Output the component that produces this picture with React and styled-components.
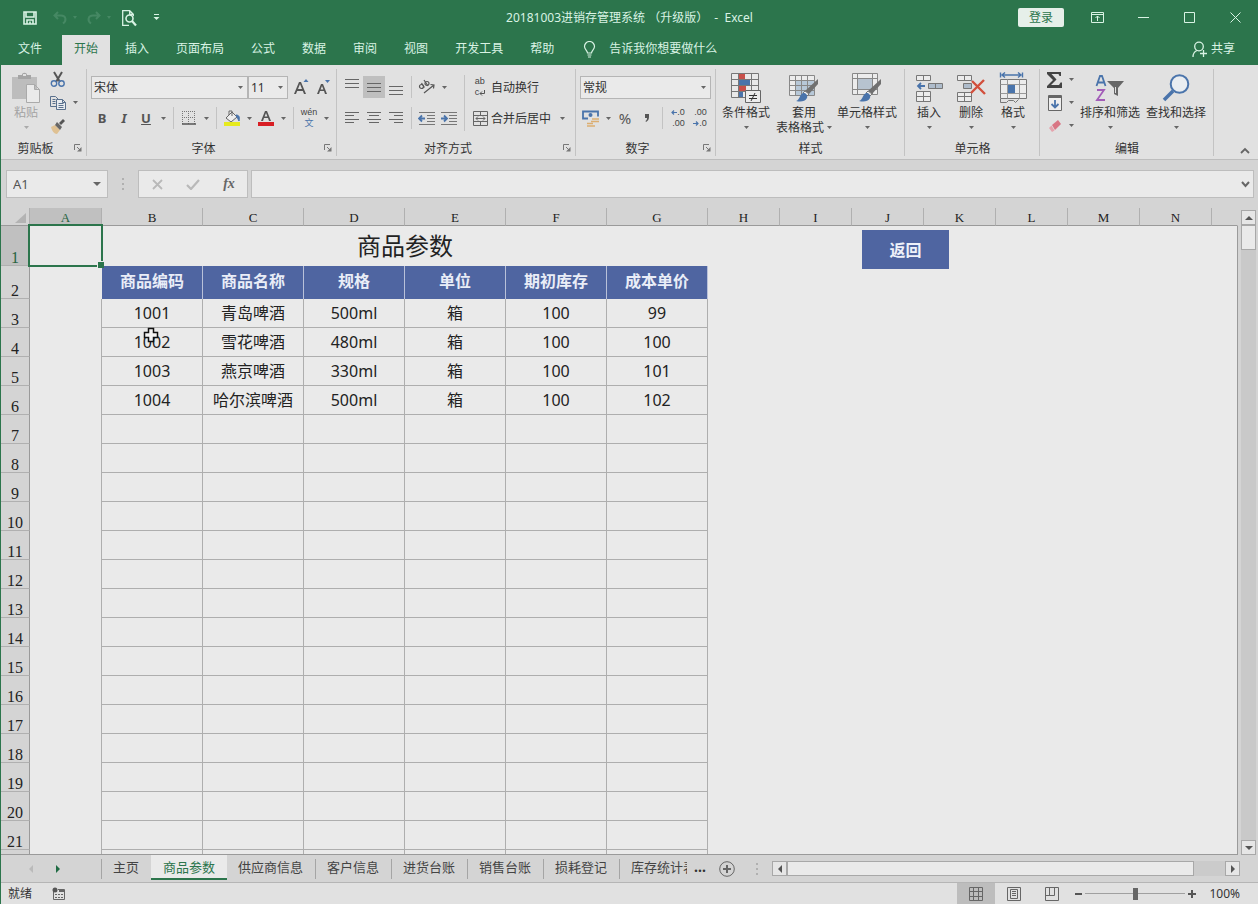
import React from "react";
import styled, { createGlobalStyle, css } from "styled-components";

const c = {
  green: "#2c754c",
  pale: "#d9f3e4",
  ribbon: "#e1e1e1",
  chrome: "#d4d4d4",
  sheet: "#eaeaea",
  line: "#aeaeae",
  edge: "#9a9a9a",
  ink: "#333333",
  icon: "#666666",
  blue: "#4a74ab",
  head: "#4f65a1",
  faded: "#458863",
};

const GlobalStyle = createGlobalStyle`
  * { box-sizing: border-box; }
  body { margin: 0; background: ${c.chrome}; }
  body, button, input, select {
    font-family: "Noto Sans", "Noto Sans CJK SC", sans-serif;
    font-size: 12px;
    line-height: 16px;
    color: ${c.ink};
  }
  button { border: 0; padding: 0; background: none; }
  svg { display: block; flex: none; }
`;

const Window = styled.div`
  display: flex;
  flex-direction: column;
  height: 100vh;
  overflow: hidden;
  border-left: 1px solid ${c.green};
`;

/* Title bar */
const TitleBar = styled.header`
  display: grid;
  grid-template-columns: 1fr auto 1fr;
  align-items: center;
  height: 35px;
  flex: none;
  background: ${c.green};
  color: ${c.pale};
`;
const QuickAccess = styled.div`
  display: flex;
  align-items: center;
  padding-left: 18px;
`;
const QuickButton = styled.button`
  display: grid;
  place-items: center;
  width: ${(p) => (p.$narrow ? 8 : 22)}px;
  height: 24px;
  margin-right: ${(p) => p.$gap || 0}px;
  color: ${(p) => (p.$off ? c.faded : c.pale)};
`;
const Title = styled.h1`
  margin: 0;
  font-size: 12px;
  font-weight: 400;
  line-height: 16px;
  white-space: pre;
`;
const WindowControls = styled.div`
  display: flex;
  align-items: center;
  justify-content: flex-end;
`;
const LoginButton = styled.button`
  width: 46px;
  height: 19px;
  margin-right: 10px;
  border-radius: 2px;
  background: #e6efe9;
  color: ${c.green};
`;
const WindowButton = styled.button`
  display: grid;
  place-items: center;
  width: 46px;
  height: 32px;
  color: ${c.pale};
`;

/* Ribbon tabs */
const TabBar = styled.nav`
  display: flex;
  align-items: stretch;
  gap: 3px;
  height: 30px;
  flex: none;
  padding-left: 5px;
  background: ${c.green};
`;
const RibbonTab = styled.button`
  padding: 0 12px 2px;
  margin-right: ${(p) => (p.$file ? 5 : 0)}px;
  color: ${(p) => (p.$active ? c.green : c.pale)};
  background: ${(p) => (p.$active ? c.ribbon : "transparent")};
`;
const TellMe = styled.button`
  display: flex;
  align-items: center;
  gap: 13px;
  padding: 0 0 2px 14px;
  color: ${c.pale};
`;
const Share = styled(TellMe)`
  gap: 4px;
  margin-left: auto;
  padding-right: 23px;
`;

/* Ribbon */
const Ribbon = styled.section`
  display: flex;
  height: 95px;
  flex: none;
  background: ${c.ribbon};
  border-bottom: 1px solid #bdbdbd;
`;
const GroupBox = styled.div`
  display: flex;
  flex-direction: column;
  width: ${(p) => p.$width}px;
  flex: none;
  background: linear-gradient(#c3c3c3, #c3c3c3) right 4px / 1px 87px no-repeat;
`;
const GroupBody = styled.div`
  display: flex;
  flex: 1;
  padding-left: ${(p) => p.$pad}px;
`;
const GroupFooter = styled.div`
  display: flex;
  align-items: center;
  height: 22px;
  text-align: center;
`;
const GroupName = styled.span`
  flex: 1;
  padding-top: 2px;
`;
const Launcher = styled.button`
  width: 17px;
  height: 16px;
  padding: 6px 0 0 4px;
  align-self: flex-start;
`;
const ToolRows = styled.div`
  display: flex;
  flex-direction: column;
  gap: 9px;
  padding-top: 11px;
`;
const ToolRow = styled.div`
  display: flex;
  align-items: center;
  height: 22px;
`;
const ToolStack = styled.div`
  display: flex;
  flex-direction: column;
  padding-top: 3px;
`;
const StackRow = styled.div`
  display: flex;
  align-items: center;
  height: 23px;
`;
const Tool = styled.button`
  display: grid;
  place-items: center;
  width: 22px;
  height: 22px;
  flex: none;
  color: #555;
  background: ${(p) => (p.$on ? "#bfbfbf" : "transparent")};
`;
const LetterTool = styled(Tool)`
  font-size: 13px;
  font-weight: ${(p) => (p.$plain ? 400 : 700)};
  font-style: ${(p) => (p.$italic ? "italic" : "normal")};
  text-decoration: ${(p) => (p.$under ? "underline" : "none")};
`;
const PercentTool = styled(LetterTool)`
  font-size: 15px;
`;
const DropButton = styled.button`
  display: grid;
  place-items: center;
  width: ${(p) => (p.$slim ? 11 : 12)}px;
  height: 22px;
  flex: none;
`;
const Divider = styled.span`
  width: 1px;
  height: ${(p) => (p.$tall ? 56 : 22)}px;
  margin: ${(p) => (p.$tall ? "10px" : "0")} 4px 0;
  background: #c3c3c3;
`;
const TextTool = styled.button`
  display: flex;
  align-items: center;
  height: 22px;
`;
const ToolText = styled.span`
  padding-top: 2px;
`;
const IconSlot = styled.span`
  display: grid;
  place-items: center;
  width: 22px;
`;
const ArrowSlot = styled.span`
  padding-left: 9px;
`;
const SelectBox = styled.span`
  display: flex;
  align-items: center;
  position: relative;
  width: ${(p) => p.$width}px;
  height: 23px;
  margin-right: ${(p) => p.$gap || 0}px;
  border: 1px solid #b5b5b5;
  background: ${c.sheet};
  svg {
    position: absolute;
    right: 4px;
    pointer-events: none;
  }
`;
const Select = styled.select`
  width: 100%;
  height: 21px;
  padding: 2px 2px 0;
  border: 0;
  appearance: none;
  background: none;
`;
const BigButton = styled.button`
  display: flex;
  flex-direction: column;
  align-items: center;
  width: ${(p) => p.$width}px;
  padding-top: 6px;
  line-height: 15px;
  white-space: nowrap;
  color: ${(p) => (p.$off ? "#a3a3a3" : c.ink)};
`;
const BigIcon = styled.span`
  display: grid;
  place-items: center;
  height: 34px;
`;
const BigLine = styled.span`
  display: flex;
  align-items: center;
  justify-content: center;
  gap: 3px;
  height: 15px;
`;
const CollapseArea = styled.div`
  display: flex;
  flex: 1;
  align-items: flex-end;
  justify-content: flex-end;
  padding: 0 8px 3px 0;
`;

/* Formula bar */
const FormulaBar = styled.section`
  display: flex;
  align-items: center;
  height: 48px;
  flex: none;
  padding: 0 4px 0 5px;
  background: ${c.chrome};
`;
const NameBox = styled.div`
  display: flex;
  align-items: center;
  width: 102px;
  height: 28px;
  padding-right: 6px;
  border: 1px solid #bdbdbd;
  background: ${c.sheet};
`;
const NameInput = styled.input`
  flex: 1;
  min-width: 0;
  padding: 0 6px;
  border: 0;
  background: none;
  font-size: 13px;
  color: #555;
`;
const Grip = styled.span`
  display: grid;
  place-items: center;
  width: 30px;
`;
const EntryButtons = styled.div`
  display: flex;
  align-items: center;
  width: 110px;
  height: 28px;
  margin-right: 3px;
  border: 1px solid #bdbdbd;
  background: ${c.sheet};
`;
const EntryButton = styled.button`
  display: grid;
  place-items: center;
  flex: 1;
  height: 26px;
  font: italic 700 14px/20px "Liberation Serif", serif;
  color: #666;
`;
const FormulaField = styled.div`
  display: flex;
  align-items: center;
  flex: 1;
  height: 28px;
  padding-right: 3px;
  border: 1px solid #bdbdbd;
  background: ${c.sheet};
`;
const FormulaInput = styled.input`
  flex: 1;
  min-width: 0;
  padding: 0 6px;
  border: 0;
  background: none;
`;

/* Worksheet */
const Workspace = styled.main`
  display: flex;
  flex: 1;
  min-height: 0;
  background: ${c.chrome};
`;
const SheetArea = styled.div`
  flex: 1;
  min-width: 0;
  overflow: hidden;
  border-bottom: 1px solid ${c.edge};
`;
const Grid = styled.table`
  width: 100%;
  table-layout: fixed;
  border-collapse: separate;
  border-spacing: 0;
`;
const Col = styled.col`
  width: ${(p) => (p.$width ? `${p.$width}px` : "auto")};
`;
const ColumnHead = styled.th`
  height: 18px;
  padding: 3px 0 0;
  border-right: 1px solid ${(p) => (p.$last ? "transparent" : "#b0b0b0")};
  border-bottom: 1px solid ${c.edge};
  background: ${(p) => (p.$active ? "#c0c0c0" : c.chrome)};
  color: ${(p) => (p.$active ? "#27633f" : "#222")};
  font: 400 13px/14px "Liberation Serif", serif;
`;
const Corner = styled.th`
  height: 18px;
  padding: 3px 3px 0 14px;
  border-bottom: 1px solid ${c.edge};
  border-right: 1px solid #b0b0b0;
  background: ${c.chrome};
`;
const RowHead = styled.th`
  height: ${(p) => p.$height}px;
  padding: 0;
  vertical-align: bottom;
  border-right: 1px solid ${c.edge};
  border-bottom: 1px solid #b0b0b0;
  background: ${(p) => (p.$active ? "#c0c0c0" : c.chrome)};
  color: ${(p) => (p.$active ? "#27633f" : "#222")};
  font: 400 16px/14px "Liberation Serif", serif;
`;
const Cell = styled.td`
  position: relative;
  padding: 0;
  background: ${c.sheet};
  font-size: 16px;
  line-height: 20px;
  text-align: center;
  white-space: nowrap;
  color: #222;
  ${(p) => p.$lined && css`
    border-right: 1px solid ${c.line};
    border-bottom: 1px solid ${c.line};
  `}
  ${(p) => p.$sideLine && css`
    border-right: 1px solid ${c.line};
  `}
  ${(p) => p.$end && css`
    border-right: 1px solid ${c.edge};
  `}
`;
const TitleCell = styled(Cell)`
  font-size: 24px;
  line-height: 32px;
`;
const HeadCell = styled.th`
  padding: 0 0 4px;
  border-right: 1px solid #b9c1d9;
  background: ${c.head};
  color: #e9edf7;
  font-size: 16px;
  font-weight: 700;
  line-height: 20px;
`;
const Selection = styled.span`
  position: absolute;
  inset: -2px -1px -1px -2px;
  z-index: 1;
  border: 2px solid ${c.green};
  &::after {
    content: "";
    position: absolute;
    right: -3px;
    bottom: -3px;
    width: 6px;
    height: 6px;
    border: solid ${c.sheet};
    border-width: 1px 0 0 1px;
    background: ${c.green};
  }
`;
const BackButton = styled.button`
  position: absolute;
  left: 10px;
  top: 4px;
  z-index: 1;
  width: 87px;
  height: 39px;
  background: ${c.head};
  color: #eef1f9;
  font-size: 16px;
  font-weight: 700;
`;
const Pointer = styled.svg`
  position: absolute;
  left: 41px;
  top: -1px;
`;

const VerticalScroll = styled.div`
  display: flex;
  flex-direction: column;
  width: 15px;
  margin: 2px 2px 0 3px;
  background: #c9c9c9;
`;
const ScrollButton = styled.button`
  display: grid;
  place-items: center;
  width: 15px;
  height: 15px;
  flex: none;
  border: 1px solid #a8a8a8;
  background: #e6e6e6;
`;
const ScrollThumb = styled.div`
  height: 25px;
  border: 1px solid #a8a8a8;
  background: ${c.sheet};
`;
const Spacer = styled.span`
  flex: 1;
`;

/* Sheet tabs */
const SheetBar = styled.section`
  display: flex;
  align-items: center;
  height: 27px;
  flex: none;
  background: ${c.chrome};
`;
const SheetNav = styled.div`
  display: flex;
  align-items: center;
  justify-content: space-between;
  width: 101px;
  height: 20px;
  padding: 0 36px 0 23px;
  border-right: 1px solid #a5a5a5;
`;
const NavButton = styled.button`
  display: grid;
  place-items: center;
  width: 14px;
  height: 16px;
`;
const SheetTab = styled.button`
  height: ${(p) => (p.$active ? 25 : 20)}px;
  align-self: ${(p) => (p.$active ? "flex-start" : "center")};
  padding: 0 12px 4px 11px;
  flex: none;
  border-right: 1px solid ${(p) => (p.$plain ? "transparent" : "#a5a5a5")};
  font-size: 13px;
  line-height: 16px;
  color: #444;
  ${(p) => p.$plain && css`
    padding-right: 11px;
  `}
  ${(p) => p.$active && css`
    padding: 0 12px;
    border-right: 0;
    border-bottom: 2px solid ${c.green};
    background: ${c.sheet};
    color: ${c.green};
  `}
`;
const ClippedTab = styled(SheetTab)`
  width: 67px;
  padding-right: 0;
  border-right: 0;
  overflow: hidden;
  white-space: nowrap;
  text-align: left;
`;
const More = styled.button`
  width: 26px;
  height: 20px;
  padding-bottom: 4px;
  font-size: 14px;
  font-weight: 700;
`;
const AddSheet = styled.button`
  display: grid;
  place-items: center;
  width: 28px;
`;
const SplitGrip = styled(Grip)`
  width: 31px;
`;
const HorizontalScroll = styled.div`
  display: flex;
  flex: 1;
  height: 15px;
  margin-right: 18px;
  background: #cbcbcb;
`;
const HorizontalThumb = styled.div`
  flex: 1;
  margin-right: 31px;
  border: 1px solid #a8a8a8;
  background: ${c.sheet};
`;

/* Status bar */
const StatusBar = styled.footer`
  display: flex;
  align-items: center;
  height: 22px;
  flex: none;
  padding: 0 18px 0 7px;
  border-top: 1px solid #b5b5b5;
  background: ${c.ribbon};
`;
const MacroButton = styled.button`
  margin-left: 20px;
`;
const ViewButton = styled.button`
  display: grid;
  place-items: center;
  width: 38px;
  height: 21px;
  background: ${(p) => (p.$on ? "#bdbdbd" : "transparent")};
`;
const ZoomButton = styled.button`
  display: grid;
  place-items: center;
  width: 14px;
  height: 20px;
`;
const ZoomSlider = styled.input`
  width: 100px;
  height: 14px;
  margin: 0;
  appearance: none;
  background: linear-gradient(#a0a0a0, #a0a0a0) center / 100% 1px no-repeat;
  &::-webkit-slider-thumb {
    appearance: none;
    width: 5px;
    height: 12px;
    background: #666;
  }
`;
const ZoomValue = styled.span`
  width: 41px;
  text-align: right;
`;

/* Icons */
const Caret = ({ color = "#666", w = 5 }) => (
  <svg width={w} height={w > 6 ? 4 : 3} viewBox="0 0 5 3" preserveAspectRatio="none"><path d="M0 0h5L2.500 3z" fill={color} /></svg>
);
const Drop = ({ label, slim }) => (
  <DropButton aria-label={label} $slim={slim}><Caret /></DropButton>
);
const Icon = ({ w = 16, h = 16, children, ...rest }) => (
  <svg width={w} height={h} viewBox={`0 0 ${w} ${h}`} fill="none" stroke="currentColor" {...rest}>{children}</svg>
);
const SaveIcon = () => (
  <Icon strokeWidth="1.6"><path d="M2 2h12v12H2zM4 2v5h8V2M5 14v-4h6v4M8 11.500V14" /></Icon>
);
const UndoIcon = ({ flip }) => (
  <Icon strokeWidth="2" transform={flip ? "scale(-1 1)" : undefined}><path d="M6 2 2.500 5.500 6 9M3 5.500h6c5 0 6 5 2 8" /></Icon>
);
const PreviewIcon = () => (
  <Icon w={16} h={18} strokeWidth="1.300"><path d="M8 16.300H1.700V1.700h7l3.600 3.600v2M8.700 1.700v3.600h3.600" /><circle cx="8.500" cy="9.500" r="3.500" strokeWidth="1.600" /><path d="m11 12 4 4.500" strokeWidth="2.200" /></Icon>
);
const CustomizeIcon = () => (
  <Icon w={7} h={7}><path d="M1 .5h5" /><path d="M.5 3h6l-3 3z" fill="currentColor" stroke="none" /></Icon>
);
const BulbIcon = () => (
  <Icon w={13} h={17} strokeWidth="1.200"><path d="M4.500 12c0-2.500-3-3.500-3-6.500a5 5 0 0 1 10 0c0 3-3 4-3 6.500zM4.500 14h4M5 16h3" /></Icon>
);
const PersonIcon = () => (
  <Icon w={15} h={17} strokeWidth="1.300"><circle cx="7" cy="5.500" r="4.300" /><path d="M1 16c0-3.500 1.500-5.500 4-6.500M11.500 9v7M8 12.500h7" /></Icon>
);
const LauncherIcon = () => (
  <Icon w={8} h={8} stroke="#777"><path d="M.5 6V.5H6M3 3l3 3" /><path d="M7.500 3v4.500H3z" fill="#777" stroke="none" /></Icon>
);
const PasteIcon = () => (
  <Icon w={28} h={32} stroke="none">
    <path d="M0 5h25v22H0z" fill="#bdbdbd" /><path d="M6 7V3h4c0-3 5-3 5 0h4v4z" fill="#a5a5a5" /><path d="M11 2h3v2h-3z" fill="#e1e1e1" />
    <path d="M14.500 12.500h8l5 5v13h-13zM22.500 12.500v5h5" fill="#eaeaea" stroke="#aaa" />
  </Icon>
);
const CutIcon = () => (
  <Icon w={16} h={17} strokeWidth="2"><path d="m4 1 6 10M12 1 6 11" stroke="#555" /><circle cx="4" cy="12.500" r="2.700" stroke={c.blue} strokeWidth="1.400" /><circle cx="11.500" cy="12.500" r="2.700" stroke={c.blue} strokeWidth="1.400" /></Icon>
);
const CopyIcon = () => (
  <Icon w={17} h={16} stroke="#59708d"><path d="M6.500 11.500h-6V1.500h5l3 3M2.500 4.500h3M2.500 6.500h3M2.500 8.500h3" /><path d="M6.500 4.500h6l3 3v7h-9z" fill="#e7ebf0" /><path d="M8.500 8.500h5M8.500 10.500h5M8.500 12.500h5M12.500 4.500v3h3" /></Icon>
);
const BrushIcon = () => (
  <Icon w={16} h={16} stroke="none"><path d="m1 9 4-2 5 5-3 4c-3 0-5-3-6-7z" fill="#dfc193" /><path d="m5 7 2-3 5 5-2 3z" fill="#666" /><path d="m9 5 4-4 2 2-4 4z" fill="#555" /></Icon>
);
const SizeIcon = ({ down }) => (
  <Icon w={15} h={16} stroke="none" fill="#555">
    <path fillRule="evenodd" d={down ? "M1 15 5 5h2l4 10H9l-1-3H4l-1 3zm3.600-4.500h2.800L6 7z" : "M0 15 5 3h2l5 12h-2l-1.200-3H3.200L2 15zm4-5h4L6 5z"} />
    <path d={down ? "M9 1h5l-2.500 3z" : "M9.500 3h5L12 0z"} fill={c.blue} />
  </Icon>
);
const BorderIcon = () => (
  <Icon w={14} h={14}><path d="M.5 0v13M6.500 0v13M12.500 0v13M0 .5h13M0 6.500h13" strokeDasharray="1 1" stroke="#777" /><path d="M0 13h14" strokeWidth="1.500" /></Icon>
);
const FillIcon = () => (
  <Icon w={17} h={17}><path d="m2 8 6-6 5 5-6 5zM5 5V1h3v5" fill="#eee" stroke="#666" /><path d="M12 5c3 0 4 2 3 6l-2-4z" fill={c.blue} stroke={c.blue} /><path d="M0 12h16v4H0z" fill="#e6ea1e" stroke="none" /></Icon>
);
const FontColorIcon = () => (
  <Icon w={16} h={17} stroke="none"><path fillRule="evenodd" d="M3 11 7 1h2l4 10h-2l-1-3H6l-1 3zm3.600-4.500h2.800L8 3z" fill="#555" /><path d="M0 12h16v4H0z" fill="#d81e24" /></Icon>
);
const TinyStack = styled.span`
  display: flex;
  flex-direction: column;
  align-items: ${(p) => p.$align || "center"};
  font: 9px/11px "Liberation Sans", "Noto Sans CJK SC", sans-serif;
  color: #444;
`;
const TinyLine = styled.span`
  display: flex;
  align-items: center;
  height: 11px;
  color: ${(p) => (p.$blue ? c.blue : "inherit")};
`;
const LinesIcon = ({ rows }) => (
  <Icon w={14} h={16} stroke="#666">{rows.map(([x, y, w]) => <path key={y} d={`M${x} ${y}.5h${w}`} />)}</Icon>
);
const OrientIcon = () => (
  <Icon w={18} h={16} strokeWidth="1.200"><circle cx="3.500" cy="7.500" r="2" /><path d="m3.500 4 3 4.500M6 1l4 6" /><circle cx="9" cy="4.500" r="2" /><path d="m6 14 10-8M12.500 5.500 16 6l-.5 3.500" /></Icon>
);
const IndentIcon = ({ out }) => (
  <Icon w={18} h={15}><path d="M1 1.500h16M9 4.500h8M9 7.500h8M9 10.500h8M1 13.500h16" stroke="#777" /><path d={out ? "M7 7.500H2M4 4.500 1 7.500l3 3" : "M1 7.500h5M4 4.500l3 3-3 3"} stroke={c.blue} strokeWidth="1.800" /></Icon>
);
const MergeIcon = () => (
  <Icon w={15} h={15} stroke="#666"><path d="M.5.500h14v14H.5zM.5 4.500h14M.5 10.500h14M7.500.500v4M7.500 10.500v4M3 7.500h9M5 5.500l-2 2 2 2M10 5.500l2 2-2 2" /></Icon>
);
const CurrencyIcon = () => (
  <Icon w={18} h={17}><path d="M6 8.500H1v-7h15v5" stroke={c.blue} strokeWidth="1.800" /><circle cx="8.500" cy="5" r="2" fill={c.blue} stroke="none" /><path d="M10 9h7M9 11.500h8M5 13.500h6M5 16h8" stroke="#dcae72" strokeWidth="1.600" /></Icon>
);
const CommaIcon = () => (
  <Icon w={6} h={8} stroke="none"><path d="M1 0h4v3c0 2-1 4-3 5l-.5-1C3 6 3 5 3 4H1z" fill="#555" /></Icon>
);
const MiniArrow = ({ right }) => (
  <Icon w={6} h={5} stroke={c.blue} strokeWidth="1.200"><path d={right ? "M0 2.500h5M3 .5l2 2-2 2" : "M6 2.500H1M3 .5l-2 2 2 2"} /></Icon>
);
const ReturnArrow = () => (
  <Icon w={6} h={6} stroke="#555"><path d="M5.500 0v3.500H1M3 1.500l-2 2 2 2" /></Icon>
);
const ConditionalIcon = () => (
  <Icon w={30} h={31} stroke="#777">
    <path d="M.5.500h27v24H.5z" fill="#e9e9e9" /><path d="M8 1h6v5H8zM8 13h7v5H8z" fill="#c8504a" stroke="none" /><path d="M8 7h11v5H8zM8 19h4v5H8z" fill={c.blue} stroke="none" />
    <path d="M.5 6.500h27M.5 12.500h27M.5 18.500h27M7.500.500v24M20.500.500v24" />
    <path d="M14.500 17.500h15v12h-15z" fill="#ececec" stroke="#666" /><path d="M18 22.500h8M18 25.500h8M24 20l-4 8" stroke="#333" />
  </Icon>
);
const StyleBrush = () => (
  <g stroke="none"><path d="M29 6v5L20 21l-4-3z" fill="#707070" /><path d="m16 18 4 3-2 2-4-3z" fill="#eee" stroke="#777" /><path d="M14 20c3 0 5 2 4 5-2 4-7 4-11 3 4-1 3-6 7-8z" fill={c.blue} /></g>
);
const TableStyleIcon = () => (
  <Icon w={30} h={31} stroke="#888"><path d="M.5 2.500h25v20H.5z" fill="#ececec" /><path d="M7 8h18v14H7z" fill="#b7c8d8" stroke="none" /><path d="M.5 7.500h25M.5 12.500h25M.5 17.500h25M6.500 2.500v20M12.500 2.500v20M18.500 2.500v20" /><StyleBrush /></Icon>
);
const CellStyleIcon = () => (
  <Icon w={30} h={31} stroke="#888"><path d="M.5.500h25v21H.5z" fill="#ececec" /><path d="M5.500.500v21M20.500.500v21M.5 5.500h25M.5 16.500h25" /><path d="M6 6h14v10H6z" fill="#b7c3cf" stroke="none" /><StyleBrush /></Icon>
);
const InsertIcon = () => (
  <Icon w={27} h={29} stroke="#777"><path d="M.5 1.500h14v5H.5zM7.500 1.500v5M.5 17.500h14v10H.5zM.5 22.500h14M7.500 17.500v10" fill="#ececec" /><path d="M12.500 9.500h14v5h-14zM19.500 9.500v5" fill="#aebccb" /><path d="M9 12H2M5 9l-3 3 3 3" stroke={c.blue} strokeWidth="1.800" /></Icon>
);
const DeleteIcon = () => (
  <Icon w={30} h={29} stroke="#777"><path d="M1.500 1.500h14v5h-14zM8.500 1.500v5M1.500 18.500h14v9h-14zM1.500 22.500h14M8.500 18.500v9" fill="#ececec" /><path d="M7.500 9.500h8v5h-8z" fill="#aebccb" /><path d="m16 7 13 13M28 6 15 19" stroke="#d2503d" strokeWidth="2.400" /></Icon>
);
const FormatIcon = () => (
  <Icon w={29} h={32} stroke="#777"><path d="M1.500.500v5M23.500.500v5M3 3h19M6 .5 3 3l3 2.500M19 .5 22 3l-3 2.500" stroke={c.blue} strokeWidth="1.400" /><path d="M1.500 7.500h26v19h-26z" fill="#ececec" /><path d="M8.500 7.500v19M20.500 7.500v19M1.500 12.500h26M1.500 21.500h26" stroke="#999" /><path d="M9 13h7v8H9z" fill={c.blue} stroke="none" /><path d="M1.500 27v3.500h6l2-2h5l2 2 3-3" /></Icon>
);
const SumIcon = () => (
  <Icon w={16} h={16} stroke="none"><path d="M0 0h14v4h-1.500L11.500 2H4.500l5 5.500L4 13h8l1.500-2.500H15V16H0v-2l6-6-6-6z" fill="#444" /></Icon>
);
const FillDownIcon = () => (
  <Icon w={14} h={16} stroke="#666"><path d="M.5.500h13v15H.5z" fill="#eee" /><path d="M1 2h12" strokeWidth="2" /><path d="M7 5v7M3.500 9 7 12.500 10.500 9" stroke={c.blue} strokeWidth="1.800" /></Icon>
);
const EraserIcon = () => (
  <Icon w={14} h={14} stroke="none"><path d="m4 6 6-5 3 4-6 6z" fill="#d97584" /><path d="m3.500 6.500 3 5L4 13l-3-4z" fill="#e5a4ae" /></Icon>
);
const SortIcon = () => (
  <Icon w={30} h={30}><path d="M1.500 13 5 3h2l3.500 10M3 9.500h6" stroke={c.blue} strokeWidth="1.800" /><path d="M2 17h7L2 27h8" stroke="#a25cb8" strokeWidth="1.800" /><path d="M12 8h17l-6 7v8l-4-2v-6z" fill="#666" stroke="none" /><path d="M20.500 14v6" stroke="#e1e1e1" /></Icon>
);
const FindIcon = () => (
  <Icon w={28} h={28} stroke={c.blue}><circle cx="17.500" cy="10" r="8.800" strokeWidth="2" fill="#e9edf1" /><path d="m11 17-9 9" strokeWidth="3.600" /></Icon>
);
const GripIcon = () => (
  <Icon w={2} h={12} stroke="none" fill="#b0b0b0"><path d="M0 0h2v2H0zM0 5h2v2H0zM0 10h2v2H0z" /></Icon>
);
const Triangle = ({ dir, color = "#555" }) => {
  const d = { up: "M0 6h8L4 2z", down: "M0 2h8L4 6z", left: "M6 0v8L2 4z", right: "M2 0v8l4-4z" }[dir];
  return <Icon w={8} h={8} stroke="none"><path d={d} fill={color} /></Icon>;
};

const Group = ({ name, width, pad, launcher, children }) => (
  <GroupBox $width={width}>
    <GroupBody $pad={pad}>{children}</GroupBody>
    <GroupFooter>
      <GroupName>{name}</GroupName>
      {launcher && <Launcher aria-label={`${name}设置`}><LauncherIcon /></Launcher>}
    </GroupFooter>
  </GroupBox>
);

const Big = ({ icon, width, lines, off }) => (
  <BigButton $width={width} $off={off}>
    <BigIcon>{icon}</BigIcon>
    <BigLine>{lines[0]}</BigLine>
    <BigLine>{lines[1]}<Caret color={off ? "#aaa" : "#666"} /></BigLine>
  </BigButton>
);

const ribbonTabs = ["文件", "开始", "插入", "页面布局", "公式", "数据", "审阅", "视图", "开发工具", "帮助"];
const columns = "ABCDEFGHIJKLMN".split("");
const fields = ["商品编码", "商品名称", "规格", "单位", "期初库存", "成本单价"];
const products = [
  ["1001", "青岛啤酒", "500ml", "箱", "100", "99"],
  ["1002", "雪花啤酒", "480ml", "箱", "100", "100"],
  ["1003", "燕京啤酒", "330ml", "箱", "100", "101"],
  ["1004", "哈尔滨啤酒", "500ml", "箱", "100", "102"],
];
const lastNumbered = 21;
const bodyRows = Array.from({ length: lastNumbered - 1 }, (_, i) => i + 3);
const sheetTabs = ["主页", "商品参数", "供应商信息", "客户信息", "进货台账", "销售台账", "损耗登记"];

const Worksheet = () => (
  <Grid>
    <colgroup>
      <Col $width={29} />
      {columns.map((name) => <Col key={name} $width={"BCDEFG".includes(name) ? 101 : 72} />)}
      <Col />
    </colgroup>
    <thead>
      <tr>
        <Corner><Icon w={11} h={11} stroke="none"><path d="M11 0v10H0z" fill="#b3b3b3" /></Icon></Corner>
        {columns.map((name) => <ColumnHead key={name} scope="col" $active={name === "A"}>{name}</ColumnHead>)}
        <ColumnHead $last />
      </tr>
    </thead>
    <tbody>
      <tr>
        <RowHead scope="row" $height={40} $active>1</RowHead>
        <Cell><Selection /></Cell>
        <TitleCell colSpan={6}>商品参数</TitleCell>
        <Cell colSpan={2} />
        <Cell><BackButton>返回</BackButton></Cell>
        <Cell colSpan={5} $end />
      </tr>
      <tr>
        <RowHead scope="row" $height={33}>2</RowHead>
        <Cell />
        {fields.map((field) => <HeadCell key={field}>{field}</HeadCell>)}
        <Cell colSpan={8} $end />
      </tr>
      {bodyRows.map((row) => (
        <tr key={row}>
          <RowHead scope="row" $height={29}>{row <= lastNumbered && row}</RowHead>
          <Cell $sideLine />
          {fields.map((field, i) => (
            <Cell key={field} $lined>
              {products[row - 3]?.[i]}
              {row === 4 && i === 0 && (
                <Pointer width="16" height="16" viewBox="0 0 16 16"><path d="M5.500 1.500h5v4h4v5h-4v4h-5v-4h-4v-5h4z" fill="#f4f4f4" stroke="#111" strokeWidth="1.500" /></Pointer>
              )}
            </Cell>
          ))}
          <Cell colSpan={8} $end />
        </tr>
      ))}
    </tbody>
  </Grid>
);

export default function App() {
  return (
    <Window>
      <GlobalStyle />
      <TitleBar>
        <QuickAccess>
          <QuickButton aria-label="保存" $gap={8}><SaveIcon /></QuickButton>
          <QuickButton aria-label="撤消" $off><UndoIcon /></QuickButton>
          <QuickButton aria-label="撤消列表" $narrow $off $gap={4}><Caret color={c.faded} w={4} /></QuickButton>
          <QuickButton aria-label="恢复" $off><UndoIcon flip /></QuickButton>
          <QuickButton aria-label="恢复列表" $narrow $off $gap={5}><Caret color={c.faded} w={4} /></QuickButton>
          <QuickButton aria-label="打印预览" $gap={5}><PreviewIcon /></QuickButton>
          <QuickButton aria-label="自定义快速访问工具栏"><CustomizeIcon /></QuickButton>
        </QuickAccess>
        <Title>20181003进销存管理系统 （升级版）  -  Excel</Title>
        <WindowControls>
          <LoginButton>登录</LoginButton>
          <WindowButton aria-label="功能区显示选项"><Icon w={13} h={11}><path d="M.5.500h12v10H.5zM.5 2.500h12M6.500 9V4M4.500 6l2-2 2 2" /></Icon></WindowButton>
          <WindowButton aria-label="最小化"><Icon w={11} h={11}><path d="M0 5.500h11" /></Icon></WindowButton>
          <WindowButton aria-label="最大化"><Icon w={11} h={11}><path d="M.5.500h10v10H.5z" /></Icon></WindowButton>
          <WindowButton aria-label="关闭"><Icon w={11} h={11}><path d="m.5.500 10 10M10.500.500l-10 10" /></Icon></WindowButton>
        </WindowControls>
      </TitleBar>

      <TabBar>
        {ribbonTabs.map((name, i) => <RibbonTab key={name} $file={i === 0} $active={i === 1}>{name}</RibbonTab>)}
        <TellMe><BulbIcon />告诉我你想要做什么</TellMe>
        <Share><PersonIcon />共享</Share>
      </TabBar>

      <Ribbon>
        <Group name="剪贴板" width={86} pad={4} launcher>
          <Big icon={<PasteIcon />} width={42} lines={["粘贴"]} off />
          <ToolStack>
            <StackRow><Tool aria-label="剪切"><CutIcon /></Tool></StackRow>
            <StackRow><Tool aria-label="复制"><CopyIcon /></Tool><Drop label="复制选项" /></StackRow>
            <StackRow><Tool aria-label="格式刷"><BrushIcon /></Tool></StackRow>
          </ToolStack>
        </Group>

        <Group name="字体" width={250} pad={4} launcher>
          <ToolRows>
            <ToolRow>
              <SelectBox $width={157}><Select aria-label="字体"><option>宋体</option></Select><Caret /></SelectBox>
              <SelectBox $width={40} $gap={2}><Select aria-label="字号"><option>11</option></Select><Caret /></SelectBox>
              <Tool aria-label="增大字号"><SizeIcon /></Tool>
              <Tool aria-label="减小字号"><SizeIcon down /></Tool>
            </ToolRow>
            <ToolRow>
              <LetterTool>B</LetterTool>
              <LetterTool $italic>I</LetterTool>
              <LetterTool $under>U</LetterTool>
              <Drop label="下划线样式" />
              <Divider />
              <Tool aria-label="边框"><BorderIcon /></Tool>
              <Drop label="边框选项" />
              <Divider />
              <Tool aria-label="填充颜色"><FillIcon /></Tool>
              <Drop label="填充颜色选项" />
              <Tool aria-label="字体颜色"><FontColorIcon /></Tool>
              <Drop label="字体颜色选项" />
              <Divider />
              <Tool><TinyStack><TinyLine>wén</TinyLine><TinyLine $blue>文</TinyLine></TinyStack></Tool>
              <Drop label="拼音选项" />
            </ToolRow>
          </ToolRows>
        </Group>

        <Group name="对齐方式" width={239} pad={4} launcher>
          <ToolRows>
            <ToolRow>
              <Tool aria-label="顶端对齐"><LinesIcon rows={[[0, 0, 14], [0, 4, 14], [0, 8, 14]]} /></Tool>
              <Tool aria-label="垂直居中" $on><LinesIcon rows={[[0, 4, 14], [0, 8, 14], [0, 12, 14]]} /></Tool>
              <Tool aria-label="底端对齐"><LinesIcon rows={[[0, 7, 14], [0, 11, 14], [0, 15, 14]]} /></Tool>
              <Divider />
              <Tool aria-label="方向"><OrientIcon /></Tool>
              <Drop label="方向选项" />
            </ToolRow>
            <ToolRow>
              <Tool aria-label="左对齐"><LinesIcon rows={[[0, 2, 14], [0, 5, 9], [0, 9, 14], [0, 12, 9]]} /></Tool>
              <Tool aria-label="居中"><LinesIcon rows={[[0, 2, 14], [2, 5, 10], [0, 9, 14], [2, 12, 10]]} /></Tool>
              <Tool aria-label="右对齐"><LinesIcon rows={[[0, 2, 14], [5, 5, 9], [0, 9, 14], [5, 12, 9]]} /></Tool>
              <Divider />
              <Tool aria-label="减少缩进量"><IndentIcon out /></Tool>
              <Tool aria-label="增加缩进量"><IndentIcon /></Tool>
            </ToolRow>
          </ToolRows>
          <Divider $tall />
          <ToolRows>
            <TextTool>
              <IconSlot><TinyStack $align="flex-start"><TinyLine>ab</TinyLine><TinyLine>c<ReturnArrow /></TinyLine></TinyStack></IconSlot>
              <ToolText>自动换行</ToolText>
            </TextTool>
            <TextTool>
              <IconSlot><MergeIcon /></IconSlot>
              <ToolText>合并后居中</ToolText>
              <ArrowSlot><Caret /></ArrowSlot>
            </TextTool>
          </ToolRows>
        </Group>

        <Group name="数字" width={140} pad={4} launcher>
          <ToolRows>
            <ToolRow>
              <SelectBox $width={131}><Select aria-label="数字格式"><option>常规</option></Select><Caret /></SelectBox>
            </ToolRow>
            <ToolRow>
              <Tool aria-label="会计数字格式"><CurrencyIcon /></Tool>
              <Drop label="会计格式选项" />
              <PercentTool $plain>%</PercentTool>
              <Tool aria-label="千位分隔样式"><CommaIcon /></Tool>
              <Divider />
              <Tool><TinyStack $align="flex-end"><TinyLine><MiniArrow />.0</TinyLine><TinyLine>.00</TinyLine></TinyStack></Tool>
              <Tool><TinyStack $align="flex-end"><TinyLine>.00</TinyLine><TinyLine><MiniArrow right />.0</TinyLine></TinyStack></Tool>
            </ToolRow>
          </ToolRows>
        </Group>

        <Group name="样式" width={189} pad={2}>
          <Big icon={<ConditionalIcon />} width={56} lines={["条件格式"]} />
          <Big icon={<TableStyleIcon />} width={60} lines={["套用", "表格格式"]} />
          <Big icon={<CellStyleIcon />} width={66} lines={["单元格样式"]} />
        </Group>

        <Group name="单元格" width={135} pad={3}>
          <Big icon={<InsertIcon />} width={42} lines={["插入"]} />
          <Big icon={<DeleteIcon />} width={42} lines={["删除"]} />
          <Big icon={<FormatIcon />} width={42} lines={["格式"]} />
        </Group>

        <Group name="编辑" width={174} pad={4}>
          <ToolStack>
            <StackRow><Tool aria-label="自动求和"><SumIcon /></Tool><Drop slim label="求和选项" /></StackRow>
            <StackRow><Tool aria-label="填充"><FillDownIcon /></Tool><Drop slim label="填充选项" /></StackRow>
            <StackRow><Tool aria-label="清除"><EraserIcon /></Tool><Drop slim label="清除选项" /></StackRow>
          </ToolStack>
          <Big icon={<SortIcon />} width={66} lines={["排序和筛选"]} />
          <Big icon={<FindIcon />} width={66} lines={["查找和选择"]} />
        </Group>

        <CollapseArea>
          <button aria-label="折叠功能区"><Icon w={10} h={10} stroke="#666" strokeWidth="1.800"><path d="m1 7 4-4 4 4" /></Icon></button>
        </CollapseArea>
      </Ribbon>

      <FormulaBar>
        <NameBox>
          <NameInput aria-label="名称框" defaultValue="A1" />
          <Caret w={8} />
        </NameBox>
        <Grip><GripIcon /></Grip>
        <EntryButtons>
          <EntryButton aria-label="取消"><Icon w={11} h={11} stroke="#b9b9b9" strokeWidth="1.800"><path d="m1 1 9 9M10 1l-9 9" /></Icon></EntryButton>
          <EntryButton aria-label="输入"><Icon w={14} h={11} stroke="#b9b9b9" strokeWidth="2.200"><path d="m1 6 4 4 8-9" /></Icon></EntryButton>
          <EntryButton>fx</EntryButton>
        </EntryButtons>
        <FormulaField>
          <FormulaInput aria-label="编辑栏" />
          <Icon w={9} h={7} stroke="#666" strokeWidth="2"><path d="m1 1 3.500 4L8 1" /></Icon>
        </FormulaField>
      </FormulaBar>

      <Workspace>
        <SheetArea><Worksheet /></SheetArea>
        <VerticalScroll>
          <ScrollButton aria-label="向上滚动"><Triangle dir="up" /></ScrollButton>
          <ScrollThumb />
          <Spacer />
          <ScrollButton aria-label="向下滚动"><Triangle dir="down" /></ScrollButton>
        </VerticalScroll>
      </Workspace>

      <SheetBar>
        <SheetNav>
          <NavButton aria-label="上一个工作表"><Triangle dir="left" color="#bababa" /></NavButton>
          <NavButton aria-label="下一个工作表"><Triangle dir="right" color="#1f6b43" /></NavButton>
        </SheetNav>
        {sheetTabs.map((name, i) => <SheetTab key={name} $active={i === 1} $plain={i === 0}>{name}</SheetTab>)}
        <ClippedTab>库存统计表</ClippedTab>
        <More aria-label="更多工作表">…</More>
        <AddSheet aria-label="新工作表"><Icon w={16} h={16} stroke="#666"><circle cx="8" cy="8" r="7.300" /><path d="M8 4v8M4 8h8" strokeWidth="2" /></Icon></AddSheet>
        <SplitGrip><GripIcon /></SplitGrip>
        <HorizontalScroll>
          <ScrollButton aria-label="向左滚动"><Triangle dir="left" /></ScrollButton>
          <HorizontalThumb />
          <ScrollButton aria-label="向右滚动"><Triangle dir="right" /></ScrollButton>
        </HorizontalScroll>
      </SheetBar>

      <StatusBar>
        <span>就绪</span>
        <MacroButton aria-label="录制宏"><Icon w={14} h={14} stroke="#666"><path d="M1.500 5v7.500h11v-10H6" /><path d="M7 4h6" strokeWidth="2" /><path d="M3 7.500h2M6 7.500h2M9 7.500h2M3 10.500h2M6 10.500h2M9 10.500h2" /><circle cx="3" cy="3" r="2.500" fill="#555" stroke="none" /></Icon></MacroButton>
        <Spacer />
        <ViewButton aria-label="普通" $on><Icon w={14} h={14} stroke="#666"><path d="M.5.500h13v13H.5zM.5 4.500h13M.5 9.500h13M4.500.500v13M9.500.500v13" /></Icon></ViewButton>
        <ViewButton aria-label="页面布局"><Icon w={14} h={14} stroke="#666"><path d="M.5.500h13v13H.5zM3.500 2.500h7v9h-7zM5 4.500h4M5 6.500h4M5 8.500h4" /></Icon></ViewButton>
        <ViewButton aria-label="分页预览"><Icon w={14} h={14} stroke="#666"><path d="M.5.500h13v13H.5zM4.500.500v8M9.500.500v8M.5 8.500h9" /></Icon></ViewButton>
        <ZoomButton aria-label="缩小"><Icon w={7} h={8} stroke="#555" strokeWidth="2"><path d="M0 4h7" /></Icon></ZoomButton>
        <ZoomSlider type="range" aria-label="缩放" min="0" max="200" defaultValue="100" />
        <ZoomButton aria-label="放大"><Icon w={8} h={8} stroke="#555" strokeWidth="2"><path d="M0 4h8M4 0v8" /></Icon></ZoomButton>
        <ZoomValue>100%</ZoomValue>
      </StatusBar>
    </Window>
  );
}
